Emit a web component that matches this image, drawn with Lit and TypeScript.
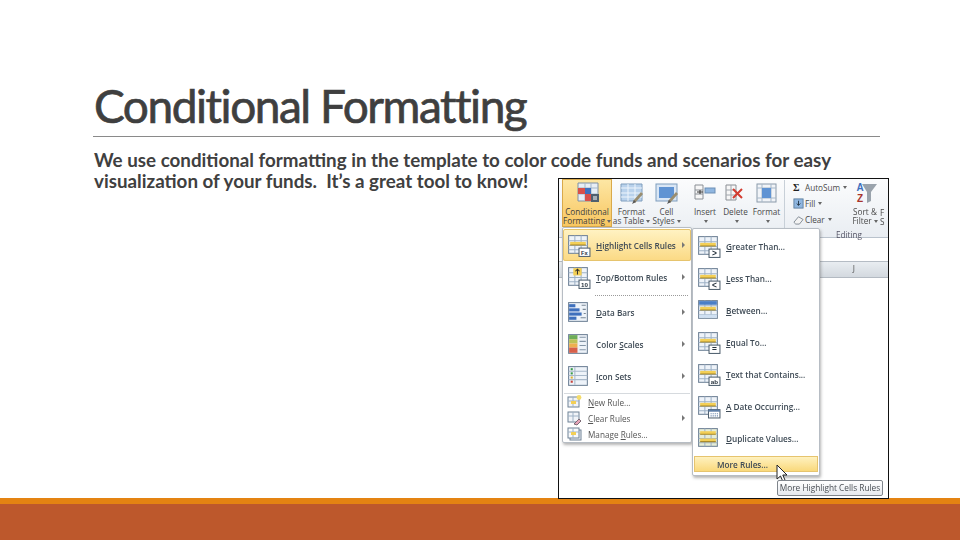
import { LitElement, html, css, svg } from "lit";
import { customElement } from "lit/decorators.js";

const grid = (fill = "#eef3f9") => svg`
  <rect x="2.5" y="2.5" width="18" height="17" fill="${fill}" stroke="#6f8296"/>
  <path d="M2.5 7.5h18M2.5 12h18M2.5 16h18M8.5 2.5v17M14.5 2.5v17" stroke="#9fb2c6" fill="none"/>`;
const band = svg`<rect x="4" y="8.5" width="15" height="3" fill="#f3cf56"/><rect x="4" y="11" width="15" height="1" fill="#a98a2a"/>`;
const badge = (t: string, size = 6) => svg`
  <rect x="12.5" y="14.5" width="10.5" height="8" fill="#fff" stroke="#50606f"/>
  <text x="17.7" y="21" font-size="${size}" font-weight="700" text-anchor="middle" fill="#26323d" font-family="Liberation Sans">${t}</text>`;

const icons: Record<string, unknown> = {
  hl: svg`${grid()}${band}${badge("Fx", 5.5)}`,
  top: svg`${grid()}<rect x="7" y="3" width="8" height="7" fill="#f3cf56"/><path d="M11 9V4M9 6l2-2 2 2" stroke="#33312a" fill="none"/>${badge("10", 6)}`,
  bars: svg`<rect x="2.5" y="2.5" width="18" height="18" fill="#eef3f9" stroke="#6f8296"/><rect x="3" y="4" width="6" height="3" fill="#3f70bd"/><rect x="3" y="8" width="10" height="3" fill="#3f70bd"/><rect x="3" y="12" width="12" height="3" fill="#3f70bd"/><rect x="3" y="16" width="7" height="3" fill="#3f70bd"/><path d="M15 5h4M16 9h3M17 13h2M14 17h5" stroke="#7a8896"/>`,
  scales: svg`<rect x="2.5" y="2.5" width="18" height="18" fill="#eef3f9" stroke="#6f8296"/><rect x="3" y="3" width="8" height="4" fill="#6fae58"/><rect x="3" y="7" width="8" height="4" fill="#bcc256"/><rect x="3" y="11" width="8" height="4" fill="#eeb04e"/><rect x="3" y="15" width="8" height="5" fill="#d8604a"/><path d="M13 5h6M13 9h6M13 13h6M13 17h6" stroke="#8495a6"/>`,
  sets: svg`<rect x="2.5" y="2.5" width="18" height="18" fill="#eef3f9" stroke="#6f8296"/><path d="M8.5 3v17M2.5 7h18M2.5 11h18M2.5 15h18" stroke="#a8b9ca"/><rect x="4.5" y="4" width="2" height="2" fill="#3a9b48"/><rect x="4.5" y="8" width="2" height="2" fill="#3a9b48"/><rect x="4.5" y="12" width="2" height="2" fill="#e0b32f"/><rect x="4.5" y="16" width="2" height="2" fill="#c8413a"/>`,
  gt: svg`${grid()}${band}${badge(">", 8)}`,
  lt: svg`${grid()}${band}${badge("<", 8)}`,
  between: svg`${grid()}<rect x="3" y="3" width="17" height="3.5" fill="#4b7fc6"/>${band}<rect x="3" y="16" width="17" height="3" fill="#cfe0f2"/>`,
  eq: svg`${grid()}${band}${badge("=", 8)}`,
  ab: svg`${grid()}${band}${badge("ab", 6)}`,
  date: svg`${grid()}${band}<rect x="12" y="15" width="11" height="8" fill="#fff" stroke="#50606f"/><rect x="12" y="15" width="11" height="2" fill="#5d7ea6"/><path d="M14 19h7M14 21h7" stroke="#5d7ea6" stroke-dasharray="1 1"/>`,
  dup: svg`${grid("#e6edd7")}<rect x="4" y="5" width="15" height="3" fill="#f3cf56"/><rect x="4" y="12" width="15" height="3" fill="#f3cf56"/><path d="M4 8h15M4 15h15" stroke="#a98a2a"/>`,
  nw: svg`<rect x="2" y="3" width="11" height="10" fill="#f1f4f8" stroke="#6f8296"/><path d="M2 7h11M7 3v10" stroke="#9fb2c6"/><rect x="5" y="7" width="5" height="3" fill="#f3cf56"/><circle cx="13" cy="3.5" r="2.4" fill="#f4dc6c"/>`,
  clr: svg`<rect x="2" y="2" width="11" height="10" fill="#f1f4f8" stroke="#6f8296"/><path d="M2 6h11M7 2v10" stroke="#9fb2c6"/><path d="M8 14l5-5 2 2-4 4z" fill="#e7a6ba" stroke="#7c6a75"/>`,
  mng: svg`<rect x="4" y="4" width="11" height="10" fill="#f1f4f8" stroke="#6f8296"/><rect x="2" y="2" width="11" height="10" fill="#f8fafc" stroke="#6f8296"/><path d="M2 6h11M7 2v10" stroke="#9fb2c6"/><rect x="5" y="6" width="5" height="3" fill="#f3cf56"/>`,
};

const ribbonIcons: Record<string, unknown> = {
  cond: svg`<path d="M3 2h20v18H3z" fill="#e8eef6" stroke="#7e90a3"/><path d="M3 7h20M3 13h20M10 2v18M16 2v18" stroke="#a7b8c9"/><rect x="3" y="7" width="7" height="6" fill="#d8504a"/><rect x="10" y="7" width="6" height="6" fill="#3f70bd"/><rect x="10" y="13" width="6" height="7" fill="#d8504a"/><rect x="16" y="13" width="8" height="8" fill="#4f5f6f"/><path d="M18 16h4M18 18h4" stroke="#fff"/>`,
  table: svg`<path d="M2 3h21v17H2z" fill="#b9d2ec" stroke="#7e9dbd"/><path d="M2 7h21M2 12h21M2 16h21M9 3v17M16 3v17" stroke="#eef5fc"/><path d="M14 20l8-9 2 2-8 9z" fill="#9a8d6f"/><path d="M13 23l2-4 2 2z" fill="#555"/>`,
  cell: svg`<rect x="2" y="3" width="21" height="17" fill="#d9e6f5" stroke="#7e9dbd"/><rect x="5" y="6" width="15" height="11" fill="#5f93d3"/><path d="M14 20l8-9 2 2-8 9z" fill="#9a8d6f"/><path d="M13 23l2-4 2 2z" fill="#555"/>`,
  insert: svg`<path d="M2 4h8v14H2z" fill="#f7f7f7" stroke="#8a8f95"/><path d="M2 9h8M2 13h8" stroke="#8a8f95"/><rect x="12" y="7" width="10" height="5" fill="#8fb6e0" stroke="#6c8fb5"/><path d="M4 11h6M7 9v4" stroke="#333"/>`,
  del: svg`<path d="M3 4h10v15H3z" fill="#f7f7f7" stroke="#8a8f95"/><path d="M3 9h10M3 14h10M8 4v15" stroke="#a0a6ad"/><path d="M10 8l9 9M19 8l-9 9" stroke="#d33c30" stroke-width="2"/>`,
  fmt: svg`<rect x="3" y="3" width="19" height="18" fill="#f1f4f8" stroke="#8a9aaa"/><path d="M3 7h19M3 17h19M8 3v18M17 3v18" stroke="#a7b8c9"/><rect x="8" y="7" width="9" height="10" fill="#5f93d3"/>`,
  sort: svg`<text x="7" y="10" font-size="10" font-weight="700" fill="#3f70bd" font-family="Liberation Sans" text-anchor="middle">A</text><text x="7" y="21" font-size="10" font-weight="700" fill="#a8352d" font-family="Liberation Sans" text-anchor="middle">Z</text><path d="M9 3h15l-6 8v9l-4 2V11z" fill="#9aa3ac"/>`,
};

@customElement("app-root")
export class AppRoot extends LitElement {
  static styles = css`
    :host { display: block; width: 960px; height: 540px; position: relative; overflow: hidden; background: #fff; color: #404040; font-family: Lato, sans-serif; }
    .slide { height: 540px; display: flex; flex-direction: column; box-sizing: border-box; }
    .content { flex: 1; padding: 80px 80px 0 93px; }
    h1 { margin: 0; font: 400 46px/52px Lato, sans-serif; letter-spacing: -1.46px; -webkit-text-stroke: 0.7px #3f3f3f; color: #3f3f3f; height: 56px; padding-left: 1px; white-space: nowrap; }
    .rule { height: 1px; background: #8a8a8a; }
    p { margin: 12px 0 0 1px; font: 700 18.8px/21px Lato, sans-serif; color: #404040; width: 770px; }
    .stripe { height: 6px; background: #e48312; }
    .foot { height: 36px; background: #bd582c; }

    .pic { position: absolute; left: 558px; top: 178px; width: 331px; height: 321px; box-sizing: border-box; border: 1px solid #111; background: #fff; overflow: hidden; font-family: "Open Sans", sans-serif; color: #4a4a4a; font-size: 8.2px; line-height: 9px; }
    .inner { filter: blur(0.35px); height: 100%; position: relative; }
    .ribbon { height: 59px; box-sizing: border-box; display: flex; padding-left: 3px; background: linear-gradient(#fbfcfd, #e9edf2); border-bottom: 1px solid #b9c2cc; }
    .btn { flex: none; display: flex; flex-direction: column; align-items: center; text-align: center; padding-top: 2px; white-space: nowrap; box-sizing: border-box; height: 48px; }
    .btn svg { width: 25px; height: 25px; margin-bottom: 1px; }
    .b50 { width: 50px; }
    .b39 { width: 39px; }
    .b31 { width: 31px; }
    .b30 { width: 30px; }
    .peek { flex: none; width: 6px; padding-top: 29px; line-height: 9px; }
    .active { background: linear-gradient(#fde7a5, #f8c65f); outline: 1px solid #d9a94a; outline-offset: -1px; color: #3d3d3d; }
    .gap8 { width: 8px; flex: none; }
    .sep { flex: none; width: 1px; height: 54px; background: #c8d0d8; margin: 1px 8px 0 2px; }
    .edit { flex: none; width: 57px; display: flex; flex-direction: column; gap: 6px; padding-top: 3px; white-space: nowrap; }
    .edit div { display: flex; align-items: center; gap: 1px; height: 10px; }
    .edit svg { width: 11px; height: 11px; }
    .sig { font: 700 10px "Liberation Serif", serif; color: #222; width: 11px; }
    .caret { display: inline-block; vertical-align: middle; margin-left: 2px; border-top: 3px solid #666; border-left: 2px solid transparent; border-right: 2px solid transparent; }
    .sheet { height: 260px; display: flex; flex-direction: column; }
    .formula { height: 24px; border-bottom: 1px solid #b5bcc4; background: #fff; box-sizing: border-box; }
    .cols { height: 15px; background: linear-gradient(#e9edf1, #d3d9df); border-bottom: 1px solid #b3bac2; display: flex; justify-content: flex-end; padding-right: 33px; color: #555; line-height: 14px; }
    .editing { position: absolute; left: 250px; top: 51px; width: 80px; text-align: center; color: #556; }

    .menu { position: absolute; box-sizing: border-box; background: #fff; border: 1px solid #b7bdc4; box-shadow: 1px 2px 3px rgba(90,90,90,.45); display: flex; flex-direction: column; font-weight: 600; color: #3e4a55; font-size: 8.2px; }
    .m1 { left: 3px; top: 48px; width: 130px; height: 216px; padding-top: 1px; border-radius: 2px; }
    .m2 { left: 133px; top: 49px; width: 128px; height: 248px; padding-top: 1px; border-radius: 2px; }
    .item { height: 32px; flex: none; display: flex; align-items: center; position: relative; box-sizing: border-box; white-space: nowrap; padding-left: 3px; }
    .item svg { width: 25px; height: 25px; flex: none; margin-right: 5px; }
    .sel { background: linear-gradient(#fff3c4, #fbd983); outline: 1px solid #e6c46e; outline-offset: -1px; border-radius: 2px; }
    .arrow { position: absolute; right: 6px; top: 50%; margin-top: -3px; border-left: 3px solid #777; border-top: 3px solid transparent; border-bottom: 3px solid transparent; }
    .dots { flex: none; margin: 0 3px 0 32px; height: 3px; border-bottom: 1px dotted #9a9a9a; box-sizing: border-box; }
    .line { flex: none; height: 2px; margin: 0 1px; border-bottom: 1px solid #d6dade; box-sizing: border-box; }
    .small { height: 16px; font-weight: 400; color: #555; }
    .small svg { width: 16px; height: 16px; margin-right: 6px; }
    .more { height: 16px; flex: none; margin: 2px 1px 0; padding-left: 23px; display: flex; align-items: center; font-weight: 600; background: linear-gradient(#fff3c4, #f9d777); outline: 1px solid #e6c46e; outline-offset: -1px; position: relative; }
    .tip { position: absolute; left: 218px; top: 301px; width: 106px; height: 16px; box-sizing: border-box; border: 1px solid #7f858c; border-radius: 2px; background: linear-gradient(#fff, #e6e9ee); font-size: 8.3px; line-height: 14px; text-align: center; color: #4a4f55; white-space: nowrap; }
    .cursor { position: absolute; left: 217px; top: 285px; width: 12px; height: 19px; }
  `;

  private row(icon: string, content: unknown, sel = false, arrow = false) {
    return html`<div class="item ${sel ? "sel" : ""}">
      <svg viewBox="0 0 24 24">${icons[icon]}</svg><span>${content}</span>${arrow ? html`<i class="arrow"></i>` : ""}
    </div>`;
  }
  private small(icon: string, content: unknown, arrow = false) {
    return html`<div class="item small">
      <svg viewBox="0 0 16 16">${icons[icon]}</svg><span>${content}</span>${arrow ? html`<i class="arrow"></i>` : ""}
    </div>`;
  }
  private btn(cls: string, icon: string, l1: string, l2: string) {
    return html`<div class="btn ${cls}"><svg viewBox="0 0 25 25">${ribbonIcons[icon]}</svg><span>${l1}</span><span>${l2}<i class="caret"></i></span></div>`;
  }

  render() {
    const caret = html`<i class="caret"></i>`;
    return html`
      <div class="slide">
        <div class="content">
          <h1>Conditional Formatting</h1>
          <div class="rule"></div>
          <p>We use conditional formatting in the template to color code funds and scenarios for easy visualization of your funds.&nbsp; It’s a great tool to know!</p>
        </div>
        <div class="stripe"></div>
        <div class="foot"></div>
      </div>

      <div class="pic"><div class="inner">
        <div class="ribbon">
          ${this.btn("b50 active", "cond", "Conditional", "Formatting")}
          ${this.btn("b39", "table", "Format", "as Table")}
          ${this.btn("b31", "cell", "Cell", "Styles")}
          <div class="gap8"></div>
          ${this.btn("b30", "insert", "Insert", "")}
          ${this.btn("b31", "del", "Delete", "")}
          ${this.btn("b31", "fmt", "Format", "")}
          <div class="sep"></div>
          <div class="edit">
            <div><span class="sig">Σ</span>AutoSum ${caret}</div>
            <div><svg viewBox="0 0 12 12"><rect x="1" y="1" width="10" height="10" fill="#8fb6e0" stroke="#5f7f9f"/><path d="M6 3v5M4 6l2 2 2-2" stroke="#234" fill="none"/></svg>Fill ${caret}</div>
            <div><svg viewBox="0 0 12 12"><path d="M1 9l5-6 5 3-4 5H3z" fill="#f3f3f3" stroke="#7d8790"/></svg>Clear ${caret}</div>
          </div>
          ${this.btn("b30", "sort", "Sort &", "Filter")}
          <div class="peek">F<br />S</div>
        </div>
        <div class="sheet">
          <div class="formula"></div>
          <div class="cols"><span>J</span></div>
        </div>
        <div class="editing">Editing</div>

        <div class="menu m1">
          ${this.row("hl", html`<u>H</u>ighlight Cells Rules`, true, true)}
          ${this.row("top", html`<u>T</u>op/Bottom Rules`, false, true)}
          <div class="dots"></div>
          ${this.row("bars", html`<u>D</u>ata Bars`, false, true)}
          ${this.row("scales", html`Color <u>S</u>cales`, false, true)}
          ${this.row("sets", html`<u>I</u>con Sets`, false, true)}
          <div class="line"></div>
          ${this.small("nw", html`<u>N</u>ew Rule...`)}
          ${this.small("clr", html`<u>C</u>lear Rules`, true)}
          ${this.small("mng", html`Manage <u>R</u>ules...`)}
        </div>

        <div class="menu m2">
          ${this.row("gt", html`<u>G</u>reater Than...`)}
          ${this.row("lt", html`<u>L</u>ess Than...`)}
          ${this.row("between", html`<u>B</u>etween...`)}
          ${this.row("eq", html`<u>E</u>qual To...`)}
          ${this.row("ab", html`<u>T</u>ext that Contains...`)}
          ${this.row("date", html`<u>A</u> Date Occurring...`)}
          ${this.row("dup", html`<u>D</u>uplicate Values...`)}
          <div class="more">More Rules...</div>
        </div>

        <svg class="cursor" viewBox="0 0 12 19"><path d="M1 1v14l3.5-3 2.4 5.5 2.3-1L6.8 11H11z" fill="#fff" stroke="#222" stroke-width="1"/></svg>
        <div class="tip">More Highlight Cells Rules</div>
      </div></div>
    `;
  }
}
